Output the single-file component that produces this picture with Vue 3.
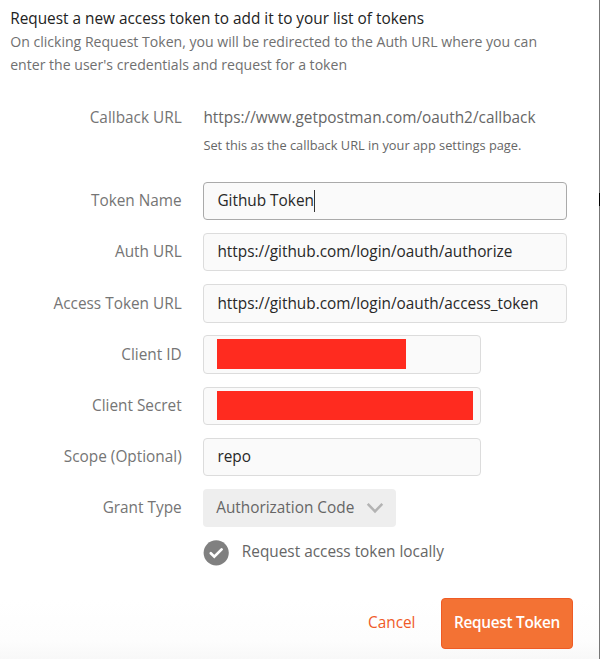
<script setup>
const fields = [
  { label: 'Token Name', value: 'Github Token', focused: true, wide: true },
  { label: 'Auth URL', value: 'https://github.com/login/oauth/authorize', wide: true },
  { label: 'Access Token URL', value: 'https://github.com/login/oauth/access_token', wide: true },
  { label: 'Client ID', redacted: 'id' },
  { label: 'Client Secret', redacted: 'secret' },
  { label: 'Scope (Optional)', value: 'repo' },
]
</script>

<template>
  <main class="dialog">
    <header class="intro">
      <h1>Request a new access token to add it to your list of tokens</h1>
      <p>On clicking Request Token, you will be redirected to the Auth URL where you can<br>enter the user's credentials and request for a token</p>
    </header>

    <section class="callback">
      <div class="label callback-label">Callback URL</div>
      <div>
        <div class="callback-url">https://www.getpostman.com/oauth2/callback</div>
        <div class="hint">Set this as the callback URL in your app settings page.</div>
      </div>
    </section>

    <section class="rows">
      <div v-for="f in fields" :key="f.label" class="row">
        <div class="label">{{ f.label }}</div>
        <div class="input" :class="{ wide: f.wide, focused: f.focused }">
          <span v-if="f.value" class="value">{{ f.value }}</span>
          <span v-if="f.focused" class="caret"></span>
          <span v-if="f.redacted" class="redacted" :class="f.redacted"></span>
        </div>
      </div>
      <div class="row">
        <div class="label">Grant Type</div>
        <div class="select">
          <span class="grant">Authorization Code</span>
          <svg class="chevron" width="18" height="12" viewBox="0 0 18 12"><path d="M1.7 1.8 9 9.4l7.3-7.6" fill="none" stroke="#b3b3b3" stroke-width="2.5" /></svg>
        </div>
      </div>
    </section>

    <div class="check-row">
      <svg width="26" height="26" viewBox="0 0 26 26"><circle cx="13.2" cy="12.8" r="12.6" fill="#808080" /><path d="m7.8 13.2 3.5 3.4 7.3-7.2" fill="none" stroke="#fff" stroke-width="2.7" stroke-linecap="round" /></svg>
      <span class="check-text">Request access token locally</span>
    </div>

    <footer class="actions">
      <span class="cancel">Cancel</span>
      <div class="submit"><span class="submit-text">Request Token</span></div>
    </footer>
    <div class="edge"></div>
    <div class="edge-mark"></div>
  </main>
</template>

<style>
body { margin: 0; background: #fff; overflow: hidden; }
</style>

<style scoped>
.dialog {
  position: relative;
  box-sizing: border-box;
  width: 600px;
  height: 659px;
  overflow: hidden;
  font-family: "Open Sans", "Noto Sans", sans-serif;
  font-size: 15.36px;
  color: #666;
  background: linear-gradient(#fff 0, #fff 600px, #fdfdfd 640px, #f8f8f8 659px);
  white-space: nowrap;
}
.intro { padding: 7px 0 0 10.2px; }
h1 { margin: 0; font-size: 15.36px; font-weight: 400; line-height: 24px; color: #222; }
p { margin: 0; font-size: 14.08px; line-height: 23px; color: #707070; margin-top: -1px; }
.callback {
  display: grid;
  grid-template-columns: 181.7px auto;
  column-gap: 21.7px;
  padding-top: 29px;
  height: 76.9px;
}
.label { text-align: right; color: #757575; }
.callback-label, .callback-url { line-height: 26px; }
.hint { font-size: 12.8px; line-height: 20px; padding-top: 4px; }
.rows { display: grid; grid-auto-rows: 38.4px; row-gap: 12.8px; }
.row { display: grid; grid-template-columns: 181.7px auto; column-gap: 21.7px; align-items: center; justify-content: start; }
.row .label, .value, .grant { margin-top: -0.8px; }
.input {
  display: flex;
  align-items: center;
  box-sizing: border-box;
  width: 277.5px;
  height: 38.4px;
  padding-left: 13px;
  border: 1.28px solid #dcdcdc;
  border-radius: 4px;
  background: #fafafa;
  color: #282828;
}
.input.wide { width: 363.5px; }
.input.focused { border-color: #aaa; }
.caret { width: 1px; height: 22px; margin-top: -1px; background: #333; }
.redacted { height: 30px; background: #ff2b1f; }
.redacted.id { width: 189px; margin-top: -1px; }
.redacted.secret { width: 256px; height: 29px; }
.select {
  display: flex;
  align-items: center;
  box-sizing: border-box;
  width: 193px;
  height: 38px;
  padding-left: 12.8px;
  border-radius: 4px;
  background: #eee;
}
.chevron { margin-left: 12px; }
.check-row { display: flex; align-items: center; height: 26px; padding: 12.3px 0 0 203px; }
.check-text { margin-left: 12.8px; padding-bottom: 3px; }
.actions {
  display: flex;
  justify-content: flex-end;
  align-items: center;
  padding: 31.8px 27px 0 0;
}
.cancel { color: #f05a28; margin-right: 25.5px; padding-bottom: 1px; }
.submit {
  display: flex;
  align-items: center;
  justify-content: center;
  box-sizing: border-box;
  width: 132px;
  height: 51px;
  border: 1px solid #ef5b25;
  border-radius: 4px;
  background: #f37234;
  color: #fff;
  font-weight: 600;
}
.submit-text { letter-spacing: -0.28px; padding-bottom: 1px; }
.edge { position: absolute; top: 0; right: 0; width: 1px; height: 659px; background: #777; }
.edge-mark { position: absolute; top: 193px; right: 0; width: 1px; height: 13px; background: #000; }
</style>
